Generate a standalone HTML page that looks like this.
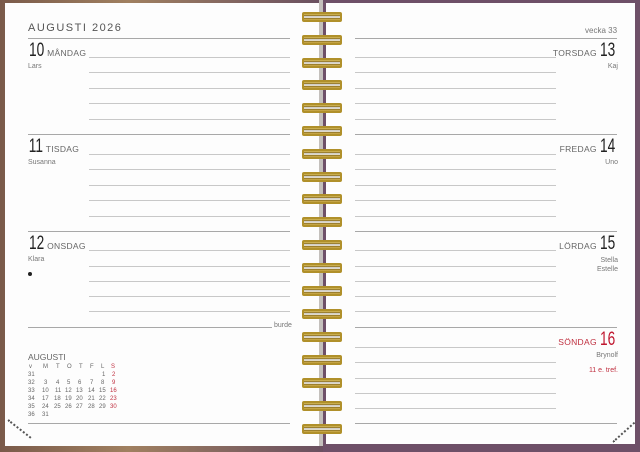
<!DOCTYPE html>
<html><head><meta charset="utf-8"><style>
*{margin:0;padding:0;box-sizing:border-box}
body{width:640px;height:452px;overflow:hidden;background:linear-gradient(90deg,#7a5a4a,#a08060 20%,#6a5060 50%,#8a7060 80%,#5a4a50);position:relative;font-family:"Liberation Sans",sans-serif;color:#555}
.a{position:absolute}
.pl{left:5px;top:3px;width:314px;height:443px;background:#fdfdfd}
.pr{left:323px;top:0;width:317px;height:452px;background:#6e5068}
.pri{left:326px;top:3px;width:309px;height:441px;background:#fdfdfd}
.gap{left:319px;top:0;width:4px;height:446px;background:#c4c0bc}
.l{position:absolute;height:1px;background:#c8c8c8}
.s{position:absolute;height:1px;background:#a8a8a8}
.num{font-family:"Liberation Sans Narrow","Liberation Sans",sans-serif;font-size:19px;color:#222;transform:scaleX(.72);display:inline-block;vertical-align:baseline}
.day{font-size:8.5px;color:#666;letter-spacing:.3px}
.nm{font-size:7px;color:#777}
.ring{position:absolute;left:302px;width:40px;height:10px;border:2px solid #b0902a;border-radius:2px;background:linear-gradient(#e8d070,#8a6a10 25%,#d0d0d0 40%,#f4f4f4 55%,#8a6a10 75%,#e0c060)}
.cal{font-size:6px;color:#666}
.cal span{position:absolute}
.dl{position:absolute;height:0;border-top:2px dotted #555}
</style></head><body>
<div class="a pl"></div>
<div class="a pr"></div>
<div class="a pri"></div>
<div class="a gap"></div>

<div class="a" style="left:28px;top:22px;font-size:11px;letter-spacing:1.5px;color:#555">AUGUSTI 2026</div>
<div class="s" style="left:28px;top:38px;width:262px"></div>
<div class="a" style="left:585px;top:26px;font-size:8px;color:#777">vecka 33</div>
<div class="s" style="left:355px;top:38px;width:262px"></div>

<div class="a" style="left:26px;top:40px;white-space:nowrap"><span class="num">10</span><span class="day">MÅNDAG</span></div>
<div class="a nm" style="left:28px;top:63px">Lars</div>
<div class="a" style="left:26px;top:136px;white-space:nowrap"><span class="num">11</span><span class="day">TISDAG</span></div>
<div class="a nm" style="left:28px;top:159px">Susanna</div>
<div class="a" style="left:26px;top:233px;white-space:nowrap"><span class="num">12</span><span class="day">ONSDAG</span></div>
<div class="a nm" style="left:28px;top:256px">Klara</div>
<div class="a" style="left:28px;top:272px;width:4px;height:4px;border-radius:50%;background:#222"></div>

<div class="l" style="left:89px;top:57px;width:201px"></div>
<div class="l" style="left:89px;top:72px;width:201px"></div>
<div class="l" style="left:89px;top:88px;width:201px"></div>
<div class="l" style="left:89px;top:103px;width:201px"></div>
<div class="l" style="left:89px;top:119px;width:201px"></div>
<div class="s" style="left:28px;top:134px;width:262px"></div>
<div class="l" style="left:89px;top:154px;width:201px"></div>
<div class="l" style="left:89px;top:169px;width:201px"></div>
<div class="l" style="left:89px;top:185px;width:201px"></div>
<div class="l" style="left:89px;top:200px;width:201px"></div>
<div class="l" style="left:89px;top:216px;width:201px"></div>
<div class="s" style="left:28px;top:231px;width:262px"></div>
<div class="l" style="left:89px;top:250px;width:201px"></div>
<div class="l" style="left:89px;top:266px;width:201px"></div>
<div class="l" style="left:89px;top:281px;width:201px"></div>
<div class="l" style="left:89px;top:296px;width:201px"></div>
<div class="l" style="left:89px;top:311px;width:201px"></div>
<div class="s" style="left:28px;top:327px;width:244px"></div>
<div class="a nm" style="left:274px;top:322px">burde</div>
<div class="s" style="left:28px;top:423px;width:262px"></div>

<div class="a" style="left:28px;top:352px;font-size:8.5px;color:#666">AUGUSTI</div>
<div class="a cal" style="left:0;top:0">
<span style="left:29px;top:364px">v</span><span style="left:43px;top:364px">M</span><span style="left:56px;top:364px">T</span><span style="left:67px;top:364px">O</span><span style="left:79px;top:364px">T</span><span style="left:90px;top:364px">F</span><span style="left:101px;top:364px">L</span><span style="left:111px;top:364px;color:#c03040">S</span>
<span style="left:28px;top:372px">31</span><span style="left:102px;top:372px">1</span><span style="left:112px;top:372px;color:#c03040">2</span>
<span style="left:28px;top:380px">32</span><span style="left:44px;top:380px">3</span><span style="left:56px;top:380px">4</span><span style="left:67px;top:380px">5</span><span style="left:78px;top:380px">6</span><span style="left:90px;top:380px">7</span><span style="left:101px;top:380px">8</span><span style="left:112px;top:380px;color:#c03040">9</span>
<span style="left:28px;top:388px">33</span><span style="left:42px;top:388px">10</span><span style="left:55px;top:388px">11</span><span style="left:65px;top:388px">12</span><span style="left:76px;top:388px">13</span><span style="left:88px;top:388px">14</span><span style="left:99px;top:388px">15</span><span style="left:110px;top:388px;color:#c03040">16</span>
<span style="left:28px;top:396px">34</span><span style="left:42px;top:396px">17</span><span style="left:54px;top:396px">18</span><span style="left:65px;top:396px">19</span><span style="left:76px;top:396px">20</span><span style="left:88px;top:396px">21</span><span style="left:99px;top:396px">22</span><span style="left:110px;top:396px;color:#c03040">23</span>
<span style="left:28px;top:404px">35</span><span style="left:42px;top:404px">24</span><span style="left:54px;top:404px">25</span><span style="left:65px;top:404px">26</span><span style="left:76px;top:404px">27</span><span style="left:88px;top:404px">28</span><span style="left:99px;top:404px">29</span><span style="left:110px;top:404px;color:#c03040">30</span>
<span style="left:28px;top:412px">36</span><span style="left:42px;top:412px">31</span>
</div>
<div class="dl" style="left:8px;top:419px;width:29px;transform:rotate(38deg);transform-origin:left"></div>
<div class="dl" style="left:613px;top:441px;width:29px;transform:rotate(-42deg);transform-origin:left"></div>

<div class="a" style="right:22px;top:40px;white-space:nowrap"><span class="day">TORSDAG</span><span class="num">13</span></div>
<div class="a nm" style="right:22px;top:63px">Kaj</div>
<div class="a" style="right:22px;top:136px;white-space:nowrap"><span class="day">FREDAG</span><span class="num">14</span></div>
<div class="a nm" style="right:22px;top:159px">Uno</div>
<div class="a" style="right:22px;top:233px;white-space:nowrap"><span class="day">LÖRDAG</span><span class="num">15</span></div>
<div class="a nm" style="right:22px;top:256px;text-align:right;line-height:9px">Stella<br>Estelle</div>
<div class="a" style="right:22px;top:329px;white-space:nowrap"><span class="day" style="color:#c03040">SÖNDAG</span><span class="num" style="color:#c01830">16</span></div>
<div class="a nm" style="right:22px;top:352px">Brynolf</div>
<div class="a nm" style="right:22px;top:367px;color:#c03040">11 e. tref.</div>

<div class="l" style="left:355px;top:57px;width:201px"></div>
<div class="l" style="left:355px;top:72px;width:201px"></div>
<div class="l" style="left:355px;top:88px;width:201px"></div>
<div class="l" style="left:355px;top:103px;width:201px"></div>
<div class="l" style="left:355px;top:119px;width:201px"></div>
<div class="s" style="left:355px;top:134px;width:262px"></div>
<div class="l" style="left:355px;top:154px;width:201px"></div>
<div class="l" style="left:355px;top:169px;width:201px"></div>
<div class="l" style="left:355px;top:185px;width:201px"></div>
<div class="l" style="left:355px;top:200px;width:201px"></div>
<div class="l" style="left:355px;top:216px;width:201px"></div>
<div class="s" style="left:355px;top:231px;width:262px"></div>
<div class="l" style="left:355px;top:250px;width:201px"></div>
<div class="l" style="left:355px;top:266px;width:201px"></div>
<div class="l" style="left:355px;top:281px;width:201px"></div>
<div class="l" style="left:355px;top:296px;width:201px"></div>
<div class="l" style="left:355px;top:311px;width:201px"></div>
<div class="s" style="left:355px;top:327px;width:262px"></div>
<div class="l" style="left:355px;top:347px;width:201px"></div>
<div class="l" style="left:355px;top:362px;width:201px"></div>
<div class="l" style="left:355px;top:378px;width:201px"></div>
<div class="l" style="left:355px;top:393px;width:201px"></div>
<div class="l" style="left:355px;top:408px;width:201px"></div>
<div class="s" style="left:355px;top:423px;width:262px"></div>

<div class="ring" style="top:12px"></div><div class="ring" style="top:35px"></div><div class="ring" style="top:58px"></div><div class="ring" style="top:80px"></div><div class="ring" style="top:103px"></div><div class="ring" style="top:126px"></div><div class="ring" style="top:149px"></div><div class="ring" style="top:172px"></div><div class="ring" style="top:194px"></div><div class="ring" style="top:217px"></div><div class="ring" style="top:240px"></div><div class="ring" style="top:263px"></div><div class="ring" style="top:286px"></div><div class="ring" style="top:309px"></div><div class="ring" style="top:332px"></div><div class="ring" style="top:355px"></div><div class="ring" style="top:378px"></div><div class="ring" style="top:401px"></div><div class="ring" style="top:424px"></div>
</body></html>
